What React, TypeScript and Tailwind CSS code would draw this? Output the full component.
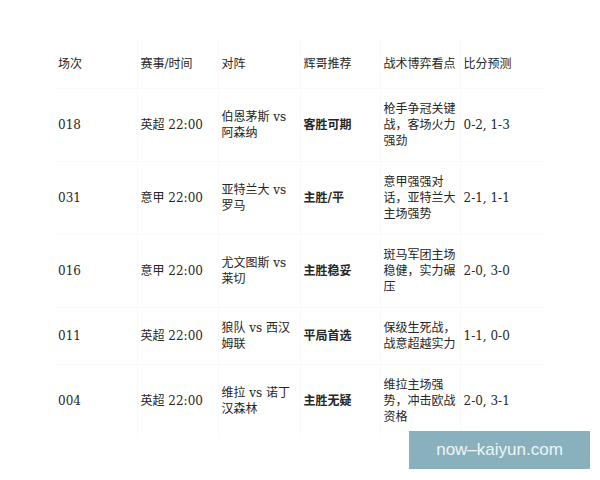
import React from 'react';

interface Match {
    no: string;
    league: string;
    home: string;
    away: string;
    pick: string;
    notes: string;
    score: string;
}

const matches: Match[] = [
    { no: '018', league: '英超', home: '伯恩茅斯', away: '阿森纳', pick: '客胜可期', notes: '枪手争冠关键战，客场火力强劲', score: '0-2, 1-3' },
    { no: '031', league: '意甲', home: '亚特兰大', away: '罗马', pick: '主胜/平', notes: '意甲强强对话，亚特兰大主场强势', score: '2-1, 1-1' },
    { no: '016', league: '意甲', home: '尤文图斯', away: '莱切', pick: '主胜稳妥', notes: '斑马军团主场稳健，实力碾压', score: '2-0, 3-0' },
    { no: '011', league: '英超', home: '狼队', away: '西汉姆联', pick: '平局首选', notes: '保级生死战，战意超越实力', score: '1-1, 0-0' },
    { no: '004', league: '英超', home: '维拉', away: '诺丁汉森林', pick: '主胜无疑', notes: '维拉主场强势，冲击欧战资格', score: '2-0, 3-1' },
];

const font = { fontFamily: '"DejaVu Serif", "Noto Sans CJK SC", serif' };

export default function App() {
    return (
        <div className="relative h-[480px] w-[600px] overflow-hidden bg-white pl-[55px] pt-[40px] text-[12px] leading-[16px] text-[#262626]" style={font}>
            <table className="w-[490px] table-fixed border-collapse">
                <colgroup>
                    <col className="w-[82px]" />
                    <col className="w-[81px]" />
                    <col className="w-[82px]" />
                    <col className="w-[80px]" />
                    <col className="w-[80px]" />
                    <col className="w-[85px]" />
                </colgroup>
                <thead>
                    <tr className="border-b border-[#f9f9f9]">
                        {['场次', '赛事/时间', '对阵', '辉哥推荐', '战术博弈看点', '比分预测'].map((h) => (
                            <th key={h} className="border-r border-[#f9f9f9] px-[3px] py-4 text-left font-normal last:border-r-0">{h}</th>
                        ))}
                    </tr>
                </thead>
                <tbody>
                    {matches.map((m) => (
                        <tr key={m.no} className="border-b border-[#f9f9f9] last:border-b-0">
                            <td className="border-r border-[#f9f9f9] px-[3px] py-3">{m.no}</td>
                            <td className="border-r border-[#f9f9f9] px-[3px] py-3">{m.league} 22:00</td>
                            <td className="border-r border-[#f9f9f9] px-[3px] py-3">{m.home} vs {m.away}</td>
                            <td className="border-r border-[#f9f9f9] px-[3px] py-3 font-bold">{m.pick}</td>
                            <td className="border-r border-[#f9f9f9] px-[3px] py-3">{m.notes}</td>
                            <td className="px-[3px] py-3">{m.score}</td>
                        </tr>
                    ))}
                </tbody>
            </table>
            <div className="absolute left-[409px] top-[431px] flex h-[38px] w-[181px] items-center justify-center bg-[#88b1bd] text-[17px] text-[#eef5f7]" style={{ fontFamily: '"Liberation Sans", Arial, sans-serif' }}>
                now–kaiyun.com
            </div>
        </div>
    );
}
